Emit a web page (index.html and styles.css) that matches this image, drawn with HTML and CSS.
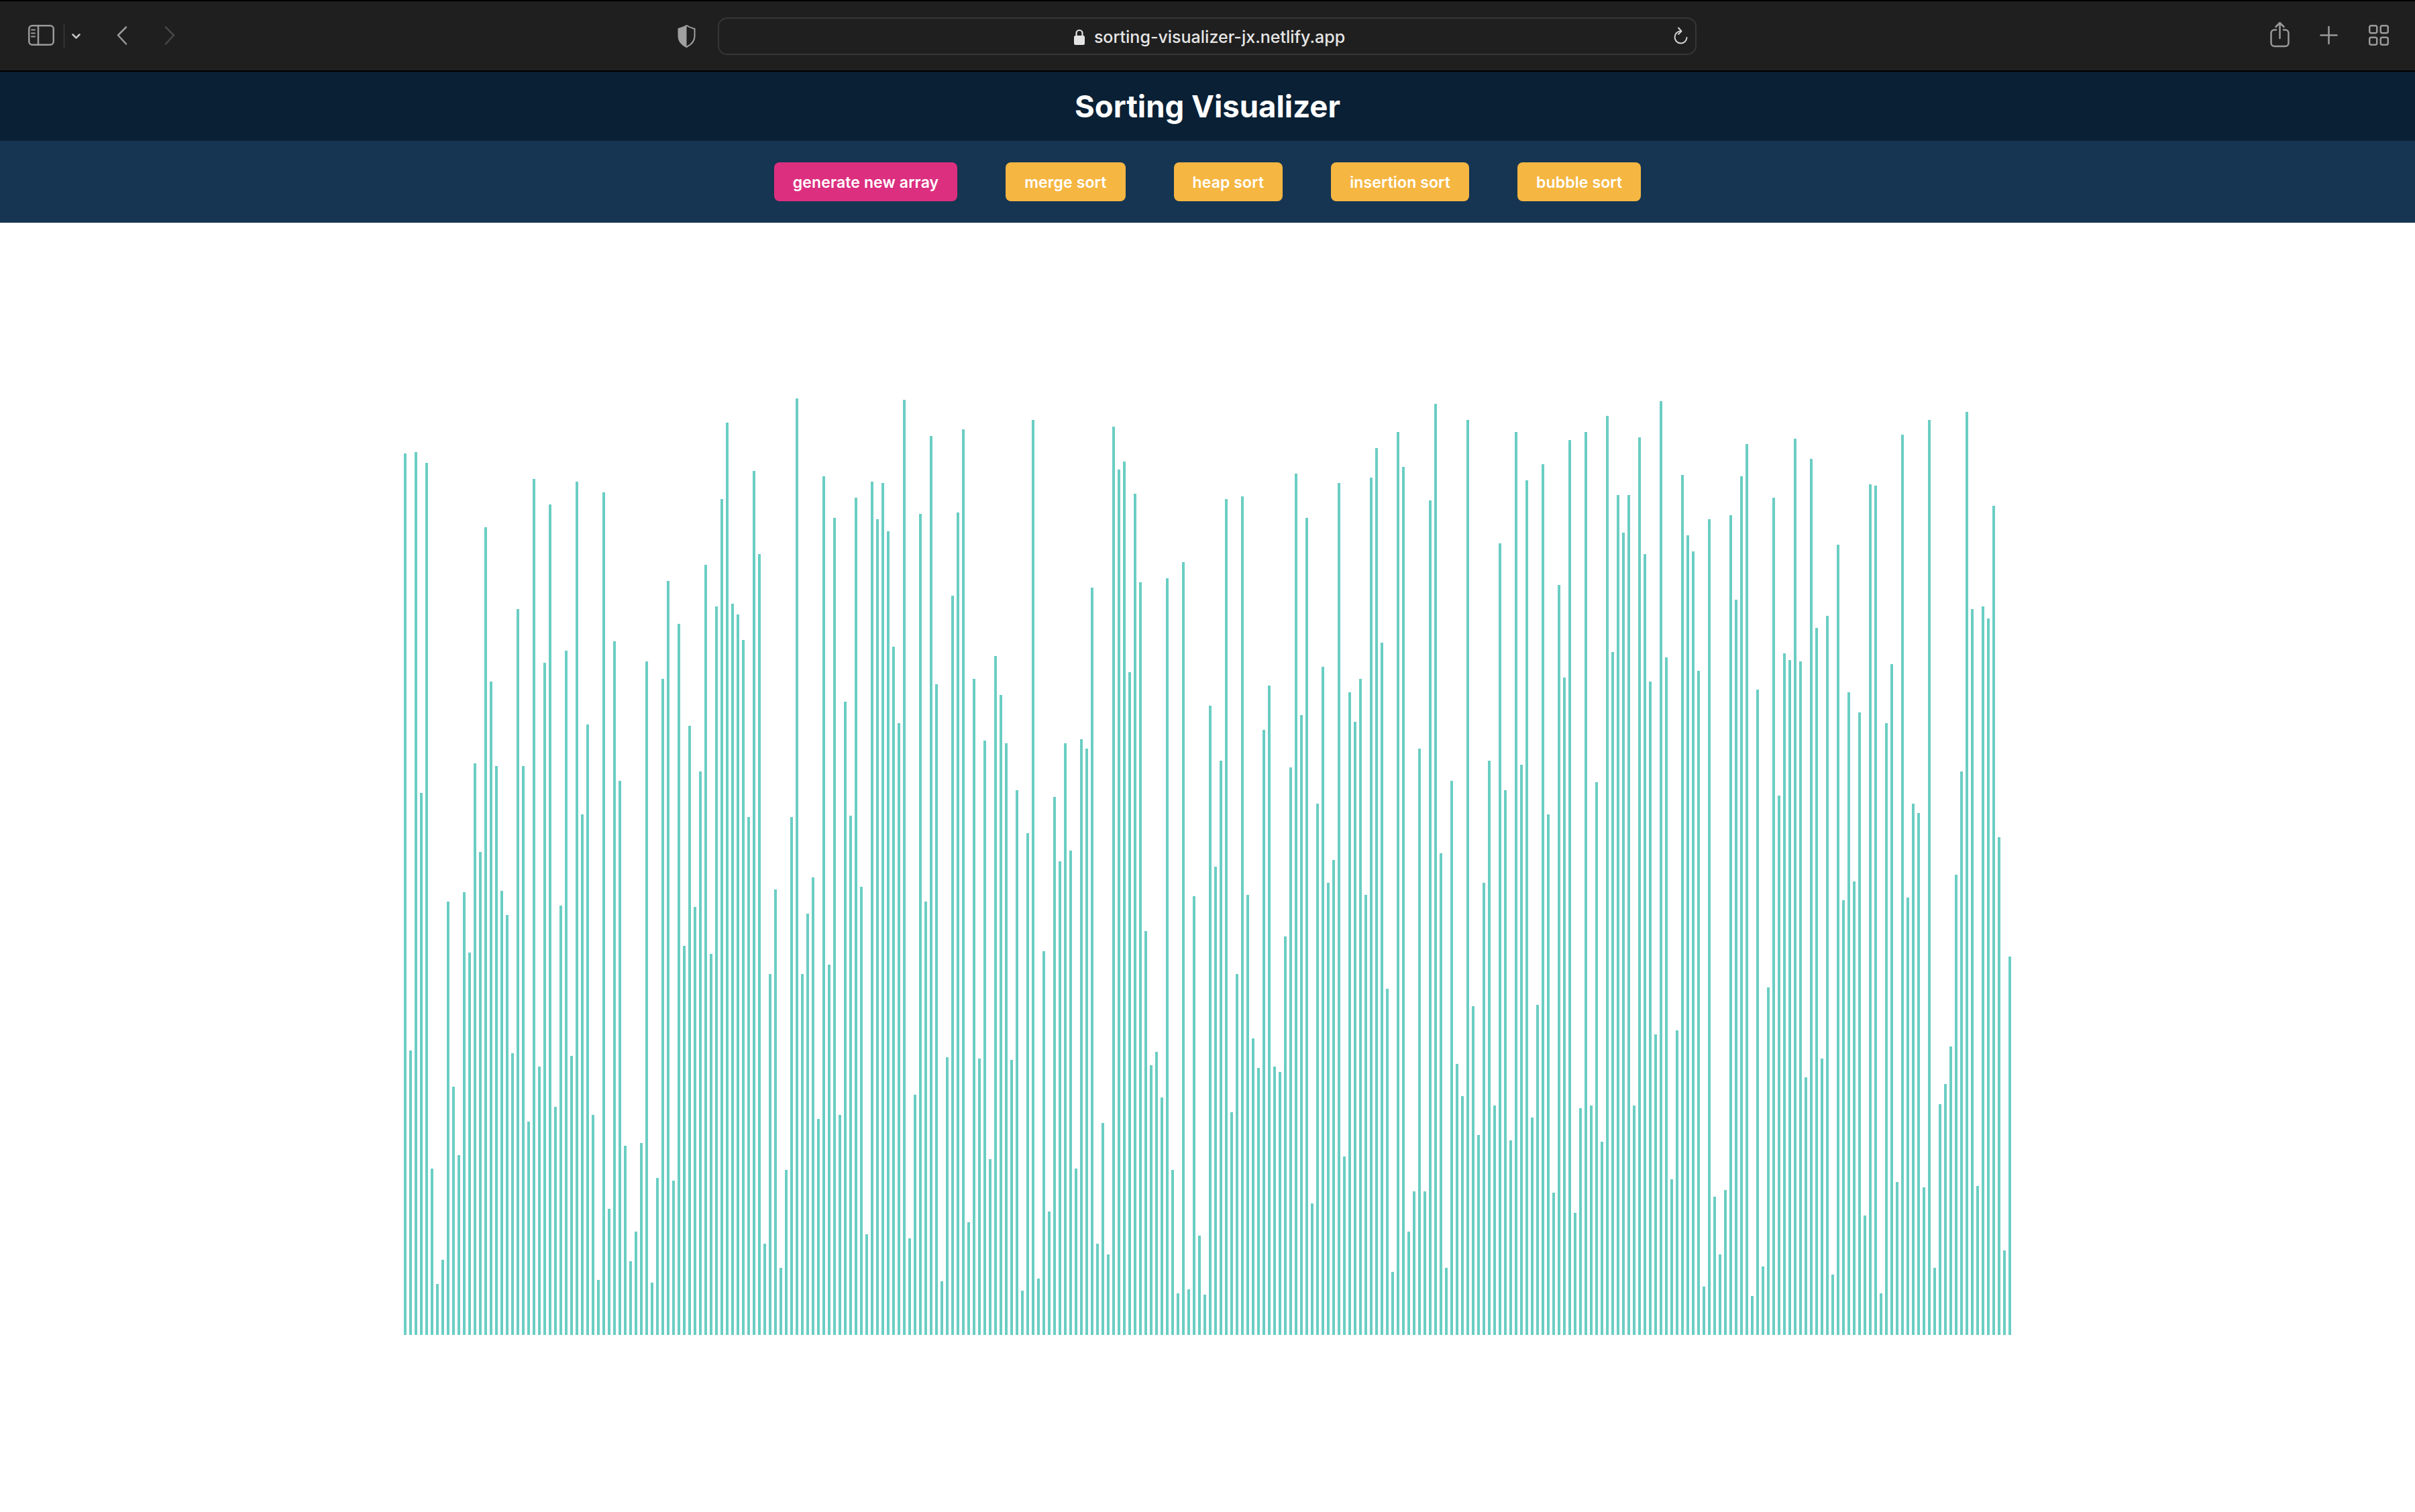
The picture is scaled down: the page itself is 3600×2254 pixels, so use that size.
FILE: index.html
```html
<!DOCTYPE html>
<html lang="en">
<head>
<meta charset="utf-8">
<title>Sorting Visualizer</title>
<link rel="stylesheet" href="styles.css">
</head>
<body>
<div class="browser-bar">
  <svg class="icon icon-sidebar" viewBox="0 0 78 59" aria-hidden="true">
    <rect class="stroke" x="1.25" y="14.25" width="36.5" height="28.5" rx="5"/>
    <path class="stroke" d="M15 14v29"/>
    <path class="stroke-thin" d="M5 20.500h5M5 25.500h5M5 30.500h5"/>
    <path class="sep" d="M53.500 12v36"/>
    <path class="stroke-light" d="M66.500 27.500l5 5 5-5"/>
  </svg>
  <svg class="icon icon-back" viewBox="0 0 16 59" aria-hidden="true">
    <path class="stroke" d="M14 16.500L2 28.500l12 13"/>
  </svg>
  <svg class="icon icon-forward" viewBox="0 0 16 59" aria-hidden="true">
    <path class="stroke-off" d="M2 16.500l12 12-12 13"/>
  </svg>
  <svg class="icon icon-shield" viewBox="0 0 27 59" aria-hidden="true">
    <path class="shield-fill" d="M13.500 14C9 17 5 18 1.500 19v11c0 8 6 13 12 16z"/>
    <path class="stroke-shield" d="M13.500 14c4.500 3 8.500 4 12 5v11c0 8-6 13-12 16-6-3-12-8-12-16V19c3.500-1 7.500-2 12-5z"/>
  </svg>
  <div class="url-bar">
    <div class="url-text">
      <svg class="lock" viewBox="0 0 18 24" aria-hidden="true">
        <path class="lock-arc" d="M4.500 11V6.500a4.500 4.500 0 0 1 9 0V11"/>
        <rect class="lock-body" x="1" y="10" width="16" height="14" rx="2.500"/>
      </svg>
      <span>sorting-visualizer-jx.netlify.app</span>
    </div>
    <svg class="icon-reload" viewBox="0 0 21 27" aria-hidden="true">
      <path class="stroke-reload" d="M10.500 6.500a9 9 0 1 0 9 9.500"/>
      <path class="stroke-reload" d="M7 1.500l4.500 5-4.500 4.500"/>
    </svg>
  </div>
  <svg class="icon icon-share" viewBox="0 0 29 59" aria-hidden="true">
    <path class="stroke" d="M9 20.500H6.500a5 5 0 0 0-5 5V40a5 5 0 0 0 5 5h16a5 5 0 0 0 5-5V25.500a5 5 0 0 0-5-5H20"/>
    <path class="stroke" d="M14.500 10.500V33M8.500 16l6-6 6 6"/>
  </svg>
  <svg class="icon icon-plus" viewBox="0 0 27 59" aria-hidden="true">
    <path class="stroke" d="M1.500 28.500h24M13.500 16v25"/>
  </svg>
  <svg class="icon icon-tabs" viewBox="0 0 30 59" aria-hidden="true">
    <rect class="stroke" x="1.250" y="14.250" width="11" height="11" rx="2.500"/>
    <rect class="stroke" x="17.750" y="14.250" width="11" height="11" rx="2.500"/>
    <rect class="stroke" x="1.250" y="31.750" width="11" height="11" rx="2.500"/>
    <rect class="stroke" x="17.750" y="31.750" width="11" height="11" rx="2.500"/>
  </svg>
</div>
<header class="title-band">
  <h1 class="title">Sorting Visualizer</h1>
</header>
<nav class="controls">
  <button class="btn btn-primary" type="button">generate new array</button>
  <button class="btn" type="button">merge sort</button>
  <button class="btn" type="button">heap sort</button>
  <button class="btn" type="button">insertion sort</button>
  <button class="btn" type="button">bubble sort</button>
</nav>
<main class="stage">
  <div class="chart" id="chart"></div>
</main>
<script src="app.js"></script>
</body>
</html>
```
FILE: styles.css
```css
* { box-sizing: border-box; }
html, body { margin: 0; padding: 0; background: #fff; }
body { font-family: Inter, "Noto Sans", sans-serif; }

.browser-bar {
  display: flex;
  align-items: center;
  height: 107px;
  padding: 0 39px 0 42px;
  background: #1f1f1f;
  border-top: 2px solid #000;
  border-bottom: 2px solid #000;
}
.icon { display: block; height: 59px; flex: none; }
.icon-sidebar { width: 78px; }
.icon-back { width: 16px; margin-left: 54px; }
.icon-forward { width: 16px; margin-left: 55px; }
.icon-shield { width: 27px; margin-left: 749px; }
.icon-share { width: 29px; margin-left: auto; }
.icon-plus { width: 27px; margin-left: 45px; }
.icon-tabs { width: 30px; margin-left: 46px; }

.stroke, .stroke-thin, .stroke-light, .stroke-off, .stroke-shield, .stroke-reload, .sep, .lock-arc {
  fill: none;
  stroke-linecap: round;
  stroke-linejoin: round;
}
.stroke { stroke: #9a9a9a; stroke-width: 2.5; }
.stroke-thin { stroke: #9a9a9a; stroke-width: 2; }
.stroke-light { stroke: #c4c4c4; stroke-width: 2.5; }
.stroke-off { stroke: #474747; stroke-width: 2.5; }
.stroke-shield { stroke: #a0a0a0; stroke-width: 2; }
.stroke-reload { stroke: #d2d2d2; stroke-width: 2; }
.sep { stroke: #3b3b3b; stroke-width: 1.5; stroke-linecap: butt; }
.shield-fill { fill: #a0a0a0; }
.lock-arc { stroke: #e4e4e4; stroke-width: 2.2; }
.lock-body { fill: #e4e4e4; }

.url-bar {
  display: flex;
  align-items: center;
  justify-content: center;
  position: relative;
  width: 1459px;
  height: 56px;
  margin-left: 33px;
  border: 2px solid #363636;
  border-radius: 14px;
}
.url-text {
  display: flex;
  align-items: center;
  gap: 13px;
  margin-left: 6px;
  padding-top: 3px;
  color: #e6e6e6;
  font-size: 25px;
  font-weight: 500;
  white-space: nowrap;
}
.lock { display: block; width: 18px; height: 24px; flex: none; }
.icon-reload {
  position: absolute;
  right: 11px;
  top: 12px;
  display: block;
  width: 21px;
  height: 27px;
}

.title-band {
  display: flex;
  align-items: center;
  justify-content: center;
  height: 103px;
  background: #0a2035;
}
.title {
  margin: 0;
  color: #fff;
  font-size: 45.5px;
  font-weight: 700;
  line-height: 1;
}
.controls {
  display: flex;
  justify-content: center;
  align-items: center;
  gap: 72px;
  height: 122px;
  background: #153552;
}
.btn {
  height: 58px;
  padding: 2px 28px 0;
  border: 0;
  border-radius: 8px;
  background: #f5b642;
  color: #fff;
  font-family: inherit;
  font-size: 23px;
  font-weight: 600;
  letter-spacing: 0.12px;
  white-space: nowrap;
}
.btn-primary { background: #dc2f7f; }

.stage {
  display: flex;
  justify-content: center;
  padding-top: 258px;
  padding-bottom: 264px;
  background: #fff;
}
.chart {
  display: flex;
  align-items: flex-end;
  gap: 4px;
  height: 1400px;
}
.bar {
  display: block;
  width: 4px;
  flex: none;
  background: #6acdc3;
}
```
FILE: app.js
```js
var TOPS = [
96,1093,94,663,112,1290,1483,1443,844,1154,
1268,829,930,614,762,220,477,618,827,867,
1098,356,618,1212,139,1120,446,181,1187,851,
426,1102,143,699,549,1201,1476,161,1357,410,
643,1252,1445,1396,1248,444,1481,1306,473,309,
1310,381,918,551,853,627,282,932,352,172,
45,347,365,408,703,125,264,1416,965,824,
1456,1292,703,4,965,
865,804,1207,134,950,204,1201,511,701,170,
820,1400,143,206,146,226,419,547,7,1407,
1167,197,844,67,482,1478,1104,334,195,56,
1380,473,1107,576,1275,435,500,580,1109,659,
1494,730,40,1474,927,1362,670,777,580,759,
1290,573,589,320,1416,1214,1434,52,123,110,
461,164,311,894,1118,1095,1172,305,1292,1499,
278,1492,836,1402,1501,
517,786,609,172,1196,965,168,833,1073,1122,
558,484,1120,1129,903,620,130,533,204,1348,
681,452,813,775,146,1270,495,544,473,833,
137,87,412,990,1463,60,119,1396,1328,589,
1328,175,13,764,1456,643,1116,1169,40,1019,
1234,813,609,1185,246,659,1243,60,616,141,
1205,1017,114,699,1331,316,470,74,1364,1189,
60,1185,645,1245,34,
428,166,228,166,1185,69,264,477,1066,9,
437,1308,1060,132,233,260,459,1487,206,1337,
1434,1326,199,340,134,81,1503,491,1454,988,
170,668,430,441,72,444,1138,105,388,1107,
367,1467,249,842,495,811,529,1369,148,150,
1499,547,448,1313,65,838,681,697,1322,40,
1456,1183,1149,1086,800,627,27,356,1319,352,
372,184,737,1427,936
];
var chart = document.getElementById("chart");
TOPS.forEach(function (top) {
  var bar = document.createElement("span");
  bar.className = "bar";
  bar.style.height = Math.round(1400 - top / 1.12) + "px";
  chart.appendChild(bar);
});
```
